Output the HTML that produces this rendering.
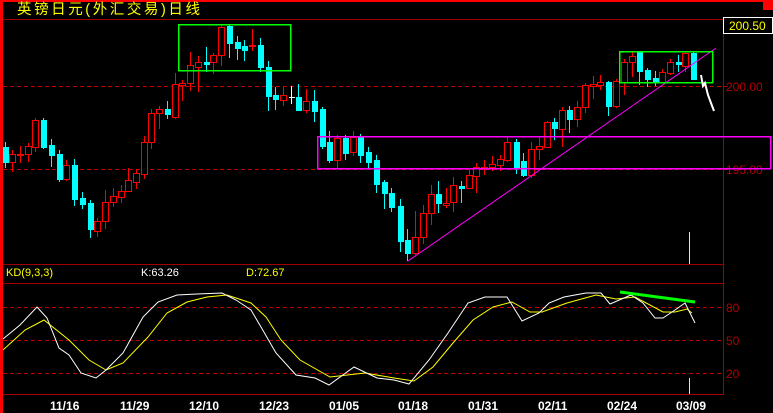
<!DOCTYPE html>
<html><head><meta charset="utf-8"><style>
html,body{margin:0;padding:0;background:#000;}
svg{display:block;}
text{font-family:"Liberation Sans","WenQuanYi Zen Hei",sans-serif;}
</style></head><body>
<svg id="s" width="773" height="413" viewBox="0 0 773 413" xmlns="http://www.w3.org/2000/svg" shape-rendering="crispEdges">
<rect width="773" height="413" fill="#000"/>
<rect x="0" y="0" width="773" height="2" fill="#f00"/>
<rect x="0" y="0" width="3" height="413" fill="#f00"/>
<rect x="763" y="0" width="10" height="10" fill="#f00"/>
<text x="17" y="14" fill="#ffff00" font-size="14.5" font-family="'WenQuanYi Zen Hei','Noto Sans CJK SC',sans-serif" textLength="183">英镑日元(外汇交易)日线</text>
<line x1="3" y1="19.5" x2="723" y2="19.5" stroke="#a00000"/>
<line x1="723.5" y1="19" x2="723.5" y2="395" stroke="#a00000"/>
<line x1="3" y1="264.5" x2="723" y2="264.5" stroke="#a00000"/>
<line x1="3" y1="283.5" x2="723" y2="283.5" stroke="#a00000"/>
<line x1="3" y1="394.5" x2="723" y2="394.5" stroke="#a00000"/>
<line x1="3" y1="86.5" x2="723" y2="86.5" stroke="#c00000" stroke-dasharray="4,3"/>
<line x1="3" y1="169.5" x2="723" y2="169.5" stroke="#c00000" stroke-dasharray="4,3"/>
<line x1="3" y1="307.5" x2="723" y2="307.5" stroke="#c00000" stroke-dasharray="4,3"/>
<line x1="3" y1="340.5" x2="723" y2="340.5" stroke="#c00000" stroke-dasharray="4,3"/>
<line x1="3" y1="373.5" x2="723" y2="373.5" stroke="#c00000" stroke-dasharray="4,3"/>
<line x1="723" y1="86.5" x2="728" y2="86.5" stroke="#c00000"/>
<line x1="723" y1="169.5" x2="728" y2="169.5" stroke="#c00000"/>
<rect x="723.5" y="17.5" width="49" height="16" fill="#000" stroke="#fff"/>
<text x="729" y="30" fill="#ffff00" font-size="12">200.50</text>
<text x="726" y="91" fill="#b00000" font-size="12">200.00</text>
<text x="726" y="174" fill="#b00000" font-size="12">195.00</text>
<text x="726" y="312" fill="#b00000" font-size="12">80</text>
<text x="726" y="345" fill="#b00000" font-size="12">50</text>
<text x="726" y="378" fill="#b00000" font-size="12">20</text>
<text x="6" y="276" fill="#ffff00" font-size="11">KD(9,3,3)</text>
<text x="141" y="276" fill="#fff" font-size="11">K:63.26</text>
<text x="246" y="276" fill="#ffff00" font-size="11">D:72.67</text>
<g fill="#fff" font-size="12" font-weight="bold">
<text x="50" y="410">11/16</text><text x="120" y="410">11/29</text><text x="189" y="410">12/10</text><text x="259" y="410">12/23</text><text x="329" y="410">01/05</text><text x="398" y="410">01/18</text><text x="468" y="410">01/31</text><text x="538" y="410">02/11</text><text x="607" y="410">02/24</text><text x="676" y="410">03/09</text>
</g>
<g id="c"></g>
<g shape-rendering="auto">
<line x1="408" y1="261" x2="716" y2="48" stroke="#ff00ff" stroke-width="1"/>
</g>
<rect x="178.5" y="24.5" width="112" height="46" fill="none" stroke="#00ff00" stroke-width="1.5"/>
<rect x="619.5" y="51.5" width="93" height="31" fill="none" stroke="#00ff00" stroke-width="1.5"/>
<rect x="317.5" y="136.5" width="453" height="32" fill="none" stroke="#ff00ff" stroke-width="1.5"/>
<polyline points="701,75 703,86 705,83 708,95 711,103 714,111" fill="none" stroke="#fff" stroke-width="2" shape-rendering="auto"/>
<line x1="689.5" y1="232" x2="689.5" y2="264" stroke="#ffff00"/>
<line x1="689.5" y1="378" x2="689.5" y2="394" stroke="#ffff00"/>
<g shape-rendering="auto" fill="none">
<polyline stroke="#ffff00" points="3,350 25,330 44,320 69,340 89,360 106,370 123,363 148,337 167,313 187,302 207,297 227,295 251,303 266,317 281,340 300,360 330,377 365,373 394,378 414,381 433,367 453,343 473,320 493,307 512,302 530,312 542,312 567,303 596,295 616,299 635,297 663,312 675,312 687,309 692,313"/>
<polyline stroke="#fff" points="3,339 20,325 37,307 47,318 59,348 69,355 81,373 96,378 106,370 123,353 143,317 158,302 177,295 197,294 222,293 236,300 251,310 261,327 276,353 296,375 315,378 329,385 354,367 377,378 394,380 409,384 429,360 448,333 468,303 485,297 507,297 522,321 539,313 549,303 564,297 586,293 601,293 610,304 631,295 643,303 655,318 663,318 675,310 685,303 695,323"/>
<line x1="620" y1="292" x2="695" y2="302" stroke="#00ff00" stroke-width="3"/>
</g>
</svg>
<script>
var d=[[5,147,162,142,168,'c'],[12,154,162,150,172,'r'],[20,154,155,146,163,'r'],[28,146,154,143,162,'r'],[35,120,147,118,152,'r'],[43,120,147,118,149,'c'],[51,145,155,139,167,'c'],[59,154,179,150,182,'c'],[66,165,179,160,181,'r'],[74,165,199,159,206,'c'],[82,198,204,192,209,'c'],[90,203,229,200,238,'c'],[97,221,231,218,237,'r'],[105,202,221,190,229,'r'],[113,196,202,188,207,'r'],[121,191,197,185,203,'r'],[128,180,191,168,192,'r'],[136,173,182,169,189,'r'],[144,142,174,136,179,'r'],[151,113,142,109,149,'r'],[159,109,113,106,129,'r'],[167,109,114,101,119,'c'],[175,84,117,73,119,'r'],[182,83,85,80,101,'r'],[190,65,83,52,91,'r'],[198,62,67,56,92,'r'],[206,62,64,47,72,'c'],[213,55,62,53,74,'r'],[221,27,55,25,66,'r'],[229,26,43,24,58,'c'],[237,42,48,36,60,'c'],[244,46,50,40,61,'c'],[252,45,46,29,51,'r'],[260,45,67,38,72,'c'],[268,67,96,61,111,'c'],[275,95,99,87,110,'c'],[283,95,100,87,106,'r'],[291,97,97,86,104,'w'],[298,97,110,84,110,'c'],[306,101,110,89,113,'r'],[314,101,111,90,122,'c'],[322,109,146,107,149,'c'],[329,142,160,131,163,'c'],[337,138,160,135,168,'r'],[345,138,153,135,160,'c'],[353,137,152,131,156,'r'],[360,137,155,134,163,'c'],[368,152,162,147,168,'c'],[376,160,184,155,193,'c'],[384,182,193,180,209,'c'],[391,193,207,188,212,'c'],[400,206,241,199,252,'c'],[407,240,253,229,261,'c'],[415,237,253,211,255,'r'],[423,213,237,205,244,'r'],[431,194,213,185,225,'r'],[438,194,203,181,213,'c'],[446,203,205,188,208,'r'],[453,185,202,177,212,'r'],[461,186,188,181,203,'c'],[469,175,188,170,189,'r'],[476,167,176,163,193,'r'],[484,167,168,160,175,'r'],[492,164,167,156,171,'r'],[500,159,165,155,171,'r'],[507,142,160,137,162,'r'],[516,142,168,139,174,'c'],[523,161,175,153,177,'c'],[531,149,175,142,178,'r'],[539,146,149,137,160,'r'],[547,122,147,121,148,'r'],[554,122,128,118,140,'c'],[562,110,129,107,147,'r'],[569,110,119,106,133,'c'],[577,107,119,101,127,'r'],[585,85,107,83,113,'r'],[593,84,86,76,99,'r'],[600,82,85,75,90,'r'],[608,82,106,81,116,'c'],[616,81,106,79,108,'r'],[624,62,82,59,95,'r'],[632,56,62,52,77,'r'],[639,52,71,51,85,'c'],[647,70,79,68,87,'c'],[655,78,81,71,86,'c'],[662,72,82,69,83,'r'],[670,62,73,59,75,'r'],[678,62,64,55,72,'c'],[685,53,66,52,72,'r'],[693,53,79,52,80,'c']];
var g=document.getElementById('c'),h='';
d.forEach(function(a){var x=a[0],col=a[5]=='c'?'#00ffff':a[5]=='r'?'#ff0000':'#ffffff';
h+='<line x1="'+(x+.5)+'" y1="'+a[3]+'" x2="'+(x+.5)+'" y2="'+a[4]+'" stroke="'+col+'"/>';
var bh=Math.max(1,a[2]-a[1]);
if(a[5]=='r')h+='<rect x="'+(x-2.5)+'" y="'+(a[1]+.5)+'" width="6" height="'+bh+'" fill="#000" stroke="#ff0000"/>';
else if(a[5]=='c')h+='<rect x="'+(x-2)+'" y="'+a[1]+'" width="6" height="'+(bh+1)+'" fill="#00ffff"/>';
else h+='<rect x="'+(x-2)+'" y="'+a[1]+'" width="6" height="1" fill="#fff"/>';});
g.innerHTML=h;
</script>
</body></html>
